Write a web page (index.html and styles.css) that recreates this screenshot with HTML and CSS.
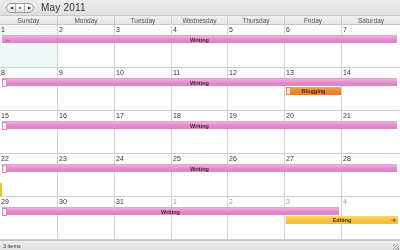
FILE: index.html
```html
<!DOCTYPE html>
<html lang="en">
<head>
    <meta charset="UTF-8">
    <title>May 2011</title>
    <link rel="stylesheet" href="styles.css">
</head>
<body>
    <div class="cal">
        <div class="toolbar">
            <div class="nav">
                <span class="btn">&#9664;</span>
                <span class="btn dot">&#9679;</span>
                <span class="btn">&#9654;</span>
            </div>
            <div class="title">May 2011</div>
        </div>

        <div class="head">
            <div>Sunday</div><div>Monday</div><div>Tuesday</div><div>Wednesday</div>
            <div>Thursday</div><div>Friday</div><div>Saturday</div>
        </div>

        <div class="weeks">
            <div class="week">
                <div class="day today">1</div><div class="day">2</div><div class="day">3</div><div class="day">4</div>
                <div class="day">5</div><div class="day">6</div><div class="day">7</div>
                <div class="ev pink first" style="grid-column: 1 / 8; grid-row: 2;"><span class="arr">&#8660;</span>Writing</div>
            </div>
            <div class="week">
                <div class="day">8</div><div class="day">9</div><div class="day">10</div><div class="day">11</div>
                <div class="day">12</div><div class="day">13</div><div class="day">14</div>
                <div class="ev pink" style="grid-column: 1 / 8; grid-row: 2;"><span class="box"></span>Writing</div>
                <div class="ev orange" style="grid-column: 6 / 7; grid-row: 3;"><span class="box"></span>Blogging</div>
            </div>
            <div class="week">
                <div class="day">15</div><div class="day">16</div><div class="day">17</div><div class="day">18</div>
                <div class="day">19</div><div class="day">20</div><div class="day">21</div>
                <div class="ev pink" style="grid-column: 1 / 8; grid-row: 2;"><span class="box"></span>Writing</div>
            </div>
            <div class="week">
                <div class="day">22</div><div class="day">23</div><div class="day">24</div><div class="day">25</div>
                <div class="day">26</div><div class="day">27</div><div class="day">28</div>
                <div class="ev pink" style="grid-column: 1 / 8; grid-row: 2;"><span class="box"></span>Writing</div>
                <div class="edge"></div>
            </div>
            <div class="week">
                <div class="day">29</div><div class="day">30</div><div class="day">31</div><div class="day other">1</div>
                <div class="day other">2</div><div class="day other">3</div><div class="day other">4</div>
                <div class="ev pink" style="grid-column: 1 / 7; grid-row: 2;"><span class="box"></span>Writing</div>
                <div class="ev yellow" style="grid-column: 6 / 8; grid-row: 3;">Editing<span class="arr end">&#10140;</span></div>
            </div>
        </div>

        <div class="status">3 items<span class="grip"></span></div>
    </div>
</body>
</html>
```

FILE: styles.css
```css
body {
    margin: 0;
    font-family: 'Liberation Sans', Arial, sans-serif;
    color: #333;
    background: #fff;
    -webkit-font-smoothing: antialiased;
}
.cal {
    width: 400px;
    height: 250px;
    display: flex;
    flex-direction: column;
    overflow: hidden;
    will-change: transform;
}
.toolbar {
    height: 15px;
    flex: none;
    display: flex;
    align-items: center;
    gap: 7px;
    padding-left: 6px;
    background: linear-gradient(#ededed, #e0e0e0);
    box-sizing: border-box;
}
.nav {
    display: flex;
    height: 8px;
    border: 1px solid #9a9a9a;
    border-radius: 5px;
    background: linear-gradient(#fff, #e4e4e4);
    overflow: hidden;
}
.btn {
    width: 8px;
    font-size: 4px;
    line-height: 8px;
    text-align: center;
    color: #222;
    border-right: 1px solid #b0b0b0;
}
.btn:last-child {
    border-right: none;
}
.title {
    font-size: 10px;
    color: #333;
    letter-spacing: 0.2px;
}
.head {
    height: 10px;
    flex: none;
    display: grid;
    grid-template-columns: 58px 57px 57px 56px 57px 57px 58px;
    background: linear-gradient(#f0f0f0, #e6e6e6);
    border-top: 1px solid #c8c8c8;
    border-bottom: 1px solid #c8c8c8;
    box-sizing: border-box;
}
.head div {
    font-size: 6.5px;
    line-height: 9px;
    text-align: center;
    color: #555;
    border-right: 1px solid #cfcfcf;
}
.head div:last-child {
    border-right: none;
}
.weeks {
    display: flex;
    flex-direction: column;
    flex: none;
}
.week {
    height: 43px;
    display: grid;
    grid-template-columns: 58px 57px 57px 56px 57px 57px 58px;
    grid-template-rows: 10px 9px 9px 1fr;
    border-bottom: 1px solid #cfcfcf;
    box-sizing: border-box;
    position: relative;
}
.day {
    grid-row: 1 / 5;
    font-size: 7px;
    line-height: 9px;
    padding-left: 1px;
    border-right: 1px solid #d4d4d4;
    color: #333;
}
.day:nth-child(1) { grid-column: 1; }
.day:nth-child(2) { grid-column: 2; }
.day:nth-child(3) { grid-column: 3; }
.day:nth-child(4) { grid-column: 4; }
.day:nth-child(5) { grid-column: 5; }
.day:nth-child(6) { grid-column: 6; }
.day:nth-child(7) { grid-column: 7; border-right: none; }
.day.today {
    background: #f1f7f7;
}
.day.other {
    color: #999;
}
.ev {
    height: 8px;
    margin: 0 3px 0 2px;
    font-size: 5.5px;
    font-weight: bold;
    line-height: 8px;
    text-align: center;
    color: #3a2a35;
    position: relative;
    z-index: 1;
    box-sizing: border-box;
}
.pink {
    background: linear-gradient(#eeb0dc, #e48ccb 50%, #dd82c3);
    border-top: 1px solid #e9a2d5;
}
.orange {
    margin: 0 1px 0 1px;
    background: linear-gradient(#f5a25c, #ee8636 50%, #e67a2a);
    color: #4a2a10;
}
.yellow {
    margin: 0 2px 0 1px;
    background: linear-gradient(#fbd86a, #f7c444 50%, #f2bb35);
    color: #3a3010;
}
.box {
    position: absolute;
    left: 0;
    top: 0;
    width: 3px;
    height: 6px;
    background: #fbeef6;
    border: 1px solid #d98abf;
}
.orange .box {
    background: #fde6d2;
    border-color: #e08a4a;
}
.arr {
    position: absolute;
    left: 3px;
    top: 0;
    font-size: 6px;
    color: #8a4a78;
}
.arr.end {
    left: auto;
    right: 2px;
    color: #7a5a10;
}
.edge {
    position: absolute;
    left: 0;
    top: 29px;
    width: 2px;
    height: 13px;
    background: #f2c030;
}
.status {
    flex: 1;
    font-size: 5.5px;
    line-height: 10px;
    padding-left: 3px;
    background: linear-gradient(#eeeeee, #e2e2e2);
    border-top: 1px solid #c4c4c4;
    color: #333;
    position: relative;
}
.grip {
    position: absolute;
    right: 1px;
    bottom: 1px;
    width: 6px;
    height: 6px;
    background: repeating-linear-gradient(135deg, transparent 0 1px, #999 1px 2px);
}
```
